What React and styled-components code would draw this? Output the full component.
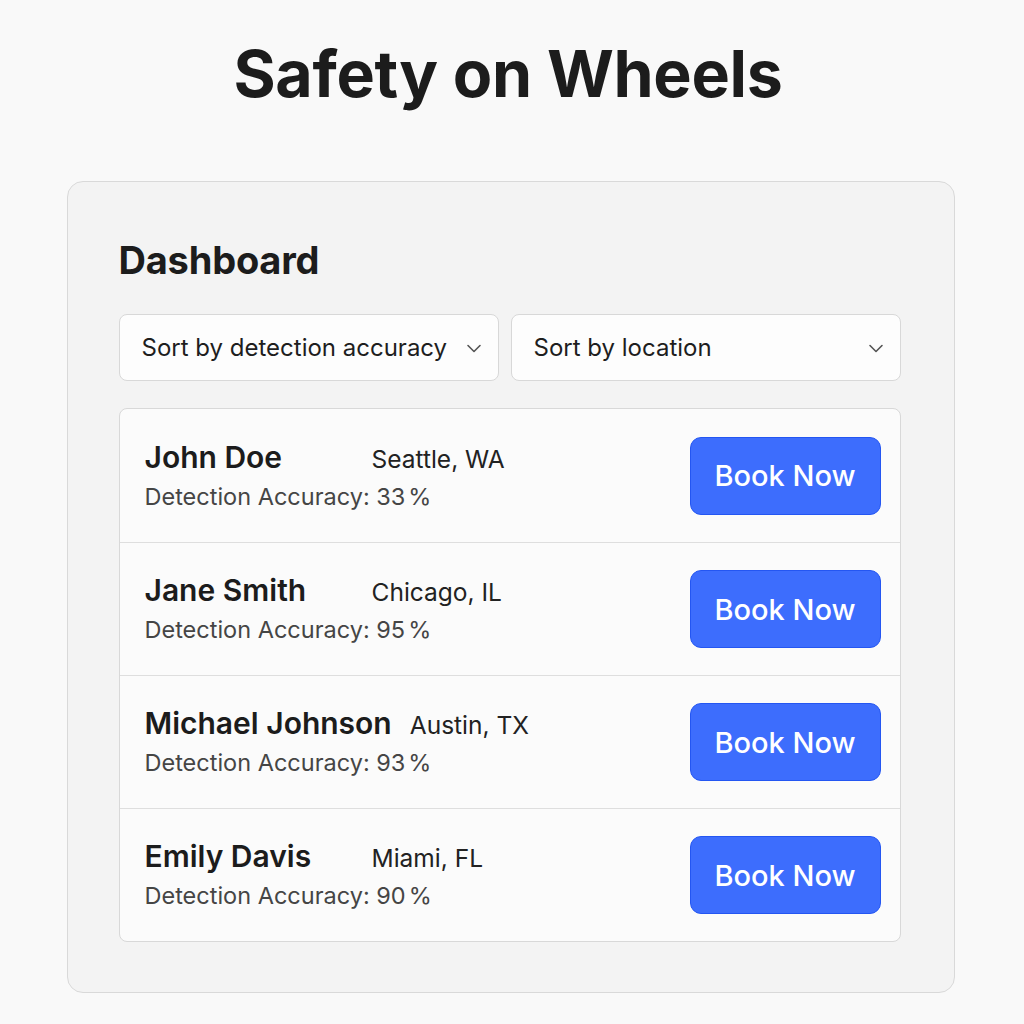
import React from 'react'
import styled, { createGlobalStyle } from 'styled-components'

const GlobalStyle = createGlobalStyle`
  body {
    margin: 0;
    background: #f9f9f9;
    font-family: Inter, "Noto Sans", sans-serif;
    color: #1a1a1a;
  }
`

const Page = styled.div`
  width: 1024px;
  min-height: 1024px;
  display: flex;
  flex-direction: column;
  align-items: flex-start;
  padding-top: 34px;
  box-sizing: border-box;
`

const Title = styled.h1`
  align-self: center;
  margin: 0 8px 0 0;
  font-size: 64.5px;
  font-weight: 700;
  letter-spacing: -0.3px;
  line-height: 80px;
  color: #1c1c1c;
`

const Panel = styled.section`
  margin: 67px 0 0 67px;
  width: 888px;
  box-sizing: border-box;
  background: #f3f3f3;
  border: 1.5px solid #d9d9d9;
  border-radius: 16px;
  padding: 56px 53.5px 50px 50.5px;
  display: flex;
  flex-direction: column;
`

const Heading = styled.h2`
  margin: 0;
  font-size: 38px;
  font-weight: 700;
  line-height: 44px;
  letter-spacing: -0.2px;
  color: #1c1c1c;
`

const Filters = styled.div`
  margin-top: 32px;
  display: grid;
  grid-template-columns: 380px 1fr;
  gap: 12px;
`

const Select = styled.div`
  height: 67px;
  box-sizing: border-box;
  background: #fdfdfd;
  border: 1.5px solid #d8d8d8;
  border-radius: 8px;
  padding: 0 14px 0 22px;
  display: flex;
  align-items: center;
  justify-content: space-between;
  font-size: 24px;
  color: #1e1e1e;
`

const List = styled.div`
  margin-top: 27px;
  background: #fbfbfb;
  border: 1.5px solid #d8d8d8;
  border-radius: 8px;
  display: flex;
  flex-direction: column;
`

const Row = styled.div`
  height: 133px;
  box-sizing: border-box;
  display: flex;
  align-items: center;
  justify-content: space-between;
  padding: 0 19px 0 25px;
  border-top: ${p => (p.first ? 'none' : '1.5px solid #dedede')};
`

const Info = styled.div`
  display: flex;
  flex-direction: column;
  gap: 8px;
`

const NameLine = styled.div`
  display: flex;
  align-items: baseline;
`

const Name = styled.span`
  min-width: 209px;
  margin-right: 18px;
  font-size: 30px;
  font-weight: 600;
  color: #1c1c1c;
  line-height: 34px;
`

const Location = styled.span`
  font-size: 24.5px;
  color: #222;
`

const Accuracy = styled.span`
  font-size: 23.5px;
  color: #454545;
  line-height: 30px;
`

const Pct = styled.span`
  margin-left: 3px;
`

const BookButton = styled.button`
  width: 191px;
  height: 78px;
  border: 1.5px solid #2456f2;
  border-radius: 11px;
  background: #3d6dfd;
  color: #fff;
  font-family: Inter, "Noto Sans", sans-serif;
  font-size: 29px;
  font-weight: 500;
  cursor: pointer;
`

const Chevron = () => (
  <svg width="20" height="20" viewBox="0 0 20 20" fill="none">
    <path d="M4 7.5l6 6 6-6" stroke="#555" strokeWidth="1.6" strokeLinecap="round" strokeLinejoin="round" />
  </svg>
)

const drivers = [
  { name: 'John Doe', location: 'Seattle, WA', accuracy: 33 },
  { name: 'Jane Smith', location: 'Chicago, IL', accuracy: 95 },
  { name: 'Michael Johnson', location: 'Austin, TX', accuracy: 93 },
  { name: 'Emily Davis', location: 'Miami, FL', accuracy: 90 },
]

export default function App() {
  return (
    <Page>
      <GlobalStyle />
      <Title>Safety on Wheels</Title>
      <Panel>
        <Heading>Dashboard</Heading>
        <Filters>
          <Select>
            <span>Sort by detection accuracy</span>
            <Chevron />
          </Select>
          <Select>
            <span>Sort by location</span>
            <Chevron />
          </Select>
        </Filters>
        <List>
          {drivers.map((d, i) => (
            <Row key={d.name} first={i === 0}>
              <Info>
                <NameLine>
                  <Name>{d.name}</Name>
                  <Location>{d.location}</Location>
                </NameLine>
                <Accuracy>Detection Accuracy: {d.accuracy}<Pct>%</Pct></Accuracy>
              </Info>
              <BookButton>Book Now</BookButton>
            </Row>
          ))}
        </List>
      </Panel>
    </Page>
  )
}
